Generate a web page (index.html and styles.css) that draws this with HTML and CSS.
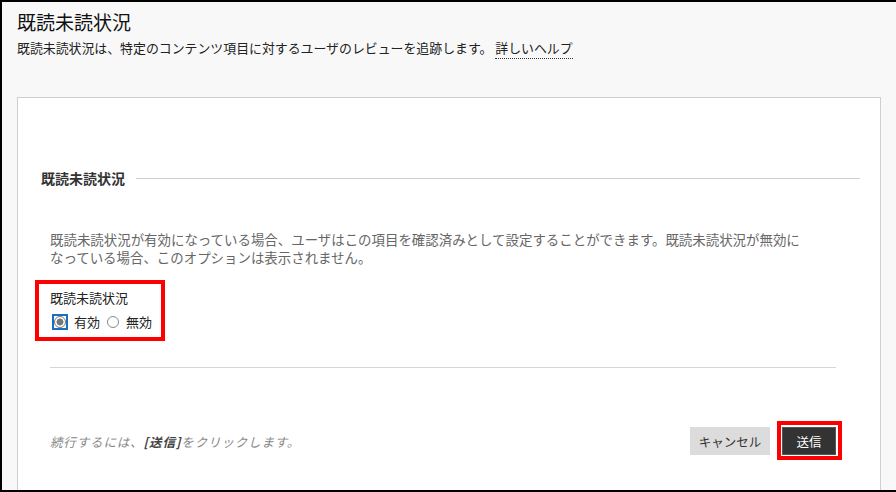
FILE: index.html
```html
<!DOCTYPE html>
<html lang="ja">
<head>
<meta charset="utf-8">
<link rel="stylesheet" href="styles.css">
</head>
<body>
<div class="page">
  <header class="head">
    <h1 class="title">既読未読状況</h1>
    <p class="sub">既読未読状況は、特定のコンテンツ項目に対するユーザのレビューを追跡します。 <span class="help">詳しいヘルプ</span></p>
  </header>
  <section class="panel">
    <div class="legend-row">
      <span class="legend">既読未読状況</span>
      <span class="legend-line"></span>
    </div>
    <div class="body">
      <p class="desc">既読未読状況が有効になっている場合、ユーザはこの項目を確認済みとして設定することができます。既読未読状況が無効に<br>なっている場合、このオプションは表示されません。</p>
      <div class="redbox">
        <div class="label">既読未読状況</div>
        <div class="radios">
          <span class="focus"><span class="radio checked"></span></span>
          <span class="opt">有効</span>
          <span class="radio"></span>
          <span class="opt">無効</span>
        </div>
      </div>
      <div class="divider"></div>
      <div class="footer">
        <p class="hint">続行するには、<b>[送信]</b>をクリックします。</p>
        <div class="buttons">
          <span class="btn cancel">キャンセル</span>
          <span class="btn submit">送信</span>
        </div>
      </div>
    </div>
  </section>
</div>
</body>
</html>
```

FILE: styles.css
```css
html, body {
  margin: 0;
  padding: 0;
}
body {
  background: #f8f8f8;
  font-family: "Noto Sans CJK JP", "Noto Sans", sans-serif;
  color: #222;
  overflow: hidden;
}
.page {
  box-sizing: border-box;
  width: 896px;
  height: 492px;
  border-left: 2px solid #000;
  border-top: 2px solid #000;
  border-bottom: 2px solid #000;
  overflow: hidden;
  padding-left: 15px;
}
.head {
  height: 95px;
}
.title {
  margin: 0;
  padding-top: 7px;
  font-size: 19px;
  font-weight: normal;
  line-height: 26px;
  color: #111;
}
.sub {
  margin: 4px 0 0;
  font-size: 12.9px;
  line-height: 18px;
  color: #222;
}
.help {
  border-bottom: 1px dotted #333;
  padding-bottom: 1px;
}
.panel {
  width: 864px;
  height: 400px;
  background: #fff;
  border: 1px solid #cfcfcf;
  border-bottom: none;
  box-sizing: border-box;
}
.legend-row {
  display: flex;
  align-items: center;
  margin-top: 71px;
  padding-left: 23px;
  padding-right: 20px;
  height: 18px;
}
.legend {
  font-size: 14px;
  font-weight: bold;
  color: #333;
  padding-right: 11px;
}
.legend-line {
  flex: 1;
  height: 1px;
  background: #cfcfcf;
}
.body {
  padding-left: 32px;
  padding-right: 44px;
}
.desc {
  margin: 43px 0 0;
  font-size: 13.45px;
  line-height: 18px;
  color: #666;
}
.redbox {
  margin-top: 14px;
  margin-left: -15px;
  width: 111px;
  height: 53px;
  border: 4px solid #ff0000;
  padding-left: 11px;
}
.label {
  margin-top: 6px;
  font-size: 13px;
  line-height: 16px;
  color: #222;
}
.radios {
  display: flex;
  align-items: center;
  margin-top: 8px;
  font-size: 13px;
  line-height: 16px;
  color: #222;
}
.focus {
  display: inline-flex;
  align-items: center;
  justify-content: center;
  width: 12px;
  height: 12px;
  border: 2px solid #1a6fc4;
  margin-left: 2px;
  margin-right: 6px;
}
.radio {
  display: inline-block;
  box-sizing: border-box;
  width: 12px;
  height: 12px;
  border: 1px solid #888;
  border-radius: 50%;
  background: #fff;
  margin-right: 7px;
}
.radio.checked {
  margin: 0;
  background: radial-gradient(circle, #777 0 3.2px, #fff 3.8px);
  border-color: #777;
}
.opt {
  margin-right: 7px;
}
.divider {
  margin-top: 26px;
  height: 1px;
  background: #d6d6d6;
}
.footer {
  display: flex;
  justify-content: space-between;
  align-items: center;
  margin-top: 59px;
}
.hint {
  margin: 0;
  font-size: 12.5px;
  font-style: italic;
  color: #888;
  letter-spacing: 0.85px;
}
.hint b {
  font-weight: bold;
  color: #444;
}
.buttons {
  display: flex;
  align-items: center;
}
.btn {
  display: inline-flex;
  align-items: center;
  justify-content: center;
  height: 28px;
  font-size: 12.5px;
  box-sizing: border-box;
}
.cancel {
  width: 80px;
  background: #dcdcdc;
  color: #333;
  margin-right: 12px;
}
.submit {
  position: relative;
  width: 54px;
  background: #333;
  color: #fff;
  border: 1px solid #555;
}
.submit::after {
  content: "";
  position: absolute;
  left: -6px;
  right: -7px;
  top: -7px;
  bottom: -6px;
  border: 4px solid #ff0000;
}
```
